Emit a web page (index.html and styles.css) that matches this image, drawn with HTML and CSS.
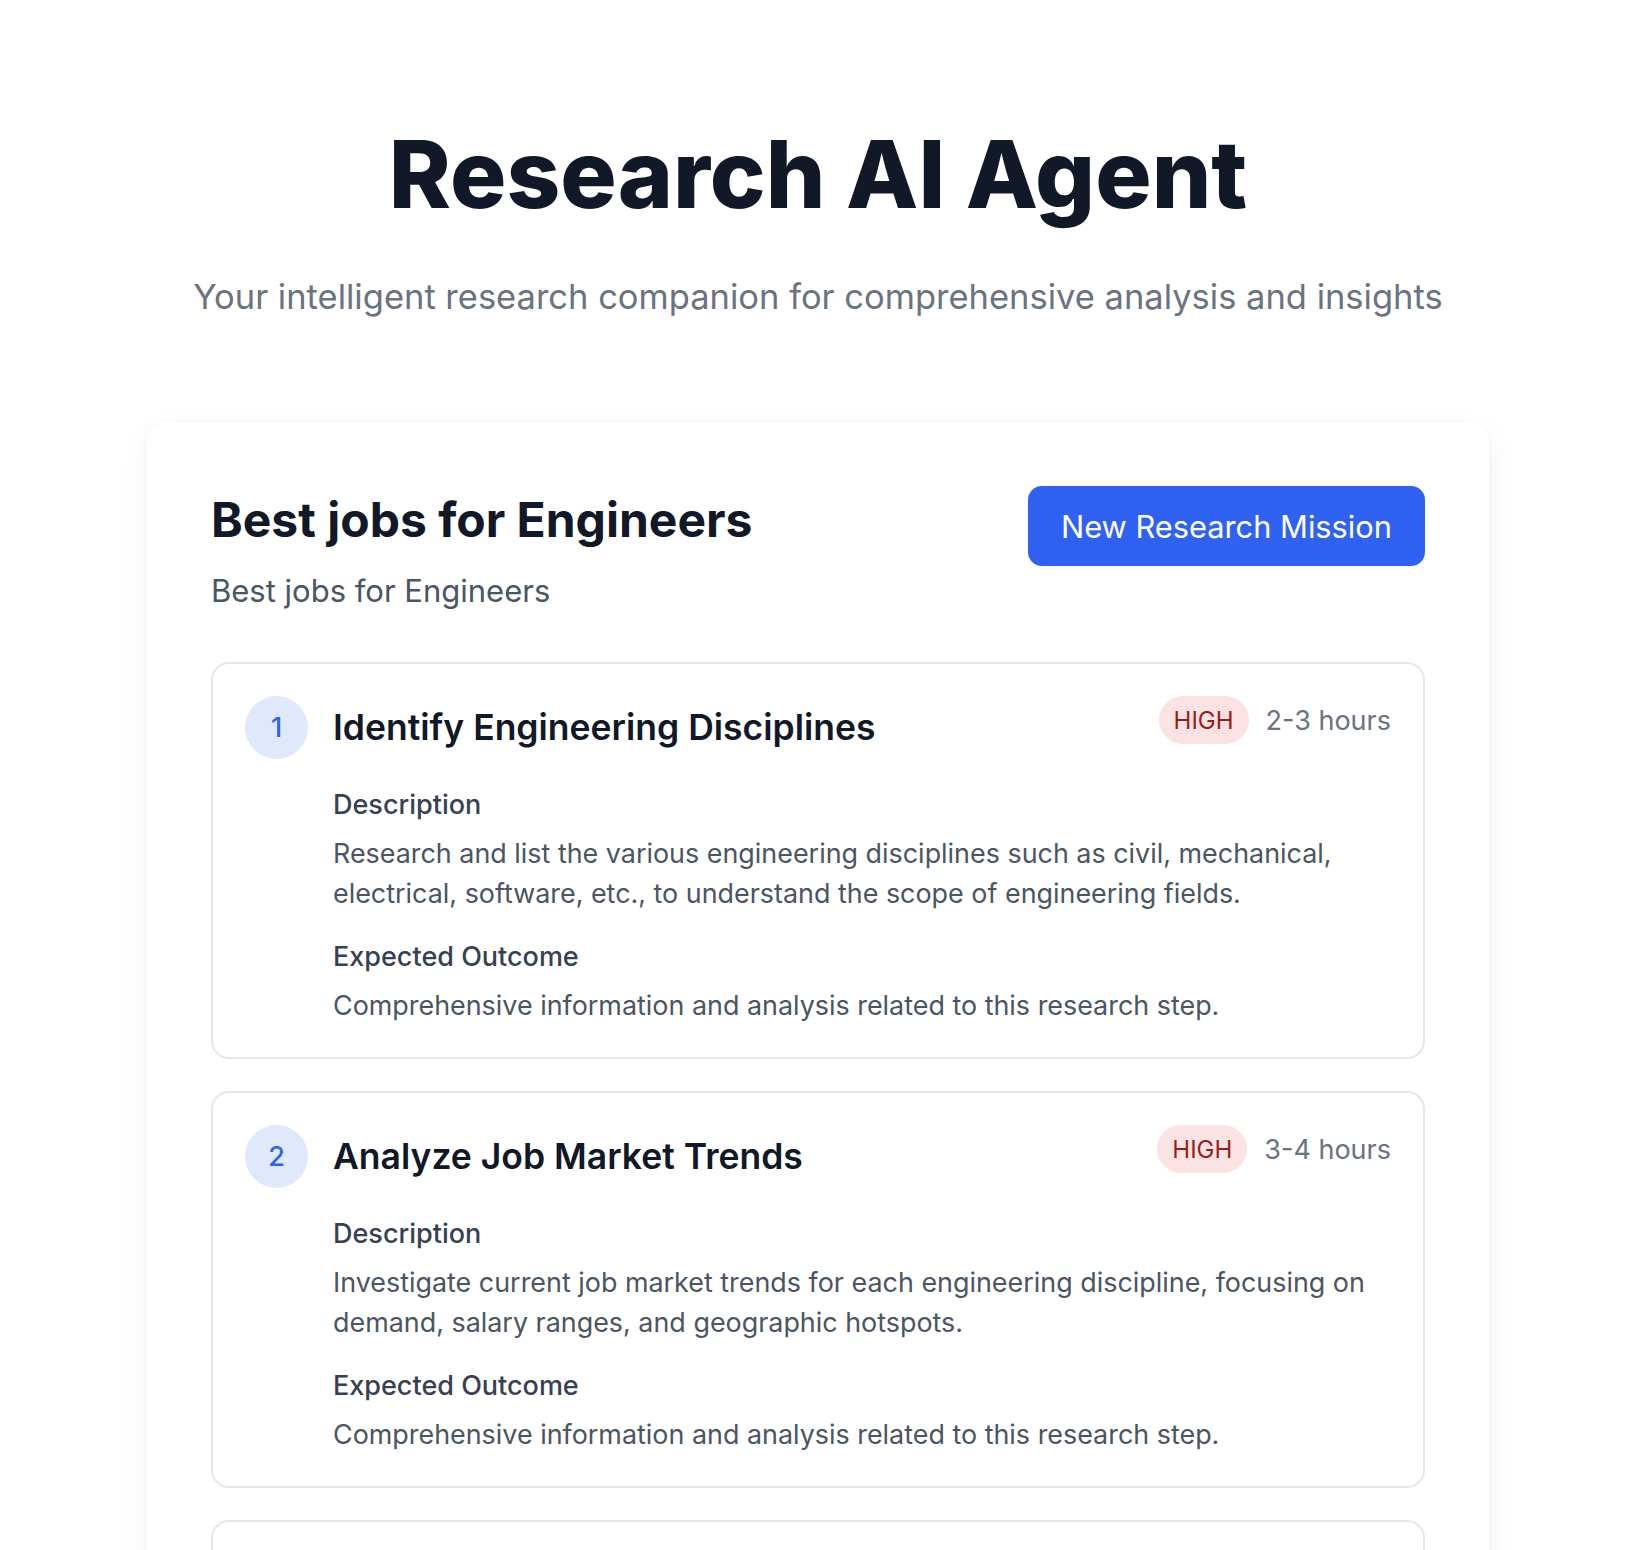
FILE: index.html
```html
<!DOCTYPE html>
<html lang="en">
<head>
<meta charset="utf-8">
<title>Research AI Agent</title>
<link rel="stylesheet" href="styles.css">
</head>
<body>
<main class="page">
  <header class="hero">
    <h1 class="hero-title">Research AI Agent</h1>
    <p class="hero-sub">Your intelligent research companion for comprehensive analysis and insights</p>
  </header>

  <section class="panel">
    <div class="panel-head">
      <div class="panel-titles">
        <h2 class="panel-title">Best jobs for Engineers</h2>
        <p class="panel-sub">Best jobs for Engineers</p>
      </div>
      <button class="btn-primary" type="button">New Research Mission</button>
    </div>

    <div class="steps">
      <article class="step">
        <div class="step-head">
          <div class="step-left">
            <span class="step-num">1</span>
            <h3 class="step-title">Identify Engineering Disciplines</h3>
          </div>
          <div class="step-meta">
            <span class="badge-high">HIGH</span>
            <span class="step-time">2-3 hours</span>
          </div>
        </div>
        <div class="step-body">
          <h4 class="step-label">Description</h4>
          <p class="step-text">Research and list the various engineering disciplines such as civil, mechanical, electrical, software, etc., to understand the scope of engineering fields.</p>
          <h4 class="step-label">Expected Outcome</h4>
          <p class="step-text">Comprehensive information and analysis related to this research step.</p>
        </div>
      </article>

      <article class="step">
        <div class="step-head">
          <div class="step-left">
            <span class="step-num">2</span>
            <h3 class="step-title">Analyze Job Market Trends</h3>
          </div>
          <div class="step-meta">
            <span class="badge-high">HIGH</span>
            <span class="step-time">3-4 hours</span>
          </div>
        </div>
        <div class="step-body">
          <h4 class="step-label">Description</h4>
          <p class="step-text">Investigate current job market trends for each engineering discipline, focusing on demand, salary ranges, and geographic hotspots.</p>
          <h4 class="step-label">Expected Outcome</h4>
          <p class="step-text">Comprehensive information and analysis related to this research step.</p>
        </div>
      </article>

      <article class="step step-partial"></article>
    </div>
  </section>
</main>
</body>
</html>
```

FILE: styles.css
```css
* { box-sizing: border-box; }

html, body {
  margin: 0;
  padding: 0;
  background: #ffffff;
}

body {
  font-family: Inter, "Noto Sans", "Liberation Sans", sans-serif;
  color: #111827;
  padding-right: 10px;
}

.page {
  width: 1342px;
  margin: 0 auto;
  padding-top: 124px;
}

.hero {
  text-align: center;
}

.hero-title {
  margin: 0;
  font-size: 94px;
  line-height: 100px;
  font-weight: 800;
  letter-spacing: 0;
  color: #111827;
}

.hero-sub {
  margin: 52px 0 0;
  font-size: 34.5px;
  line-height: 42px;
  color: #6b7280;
  white-space: nowrap;
}

.panel {
  margin-top: 104px;
  background: #ffffff;
  border-radius: 20px;
  box-shadow: 0 10px 30px rgba(0, 0, 0, 0.06), 0 2px 8px rgba(0, 0, 0, 0.03);
  padding: 64px 64px 64px;
}

.panel-head {
  display: flex;
  justify-content: space-between;
  align-items: flex-start;
}

.panel-title {
  margin: 6px 0 0;
  font-size: 48px;
  line-height: 56px;
  font-weight: 700;
  color: #111827;
}

.panel-sub {
  margin: 23px 0 0;
  font-size: 31px;
  line-height: 40px;
  color: #4b5563;
}

.btn-primary {
  height: 80px;
  padding: 0 33px;
  border: 0;
  border-radius: 14px;
  background: #2f61f3;
  color: #ffffff;
  font-family: inherit;
  font-size: 30.8px;
  font-weight: 400;
}

.steps {
  margin-top: 51px;
  display: flex;
  flex-direction: column;
  gap: 32px;
}

.step {
  border: 2px solid #e5e7eb;
  border-radius: 18px;
  padding: 32px 32px 32px;
}

.step-partial {
  height: 120px;
}

.step-head {
  display: flex;
  justify-content: space-between;
  align-items: flex-start;
}

.step-left {
  display: flex;
  align-items: center;
  gap: 25px;
}

.step-num {
  width: 63px;
  height: 63px;
  border-radius: 50%;
  background: #dfe9fb;
  color: #2f61f3;
  display: flex;
  align-items: center;
  justify-content: center;
  font-size: 27px;
  font-weight: 500;
}

.step-title {
  margin: 0;
  font-size: 35.5px;
  line-height: 44px;
  font-weight: 600;
  color: #111827;
}

.step-meta {
  display: flex;
  align-items: center;
  gap: 17px;
}

.badge-high {
  height: 48px;
  padding: 0 15px;
  border-radius: 24px;
  background: #fbe3e3;
  color: #9b1c1c;
  font-size: 24px;
  display: flex;
  align-items: center;
}

.step-time {
  font-size: 27px;
  color: #6b7280;
}

.step-body {
  margin-left: 88px;
  margin-top: 28px;
}

.step-label {
  margin: 0;
  font-size: 27px;
  line-height: 36px;
  font-weight: 500;
  color: #374151;
}

.step-text {
  margin: 10px 0 26px;
  font-size: 26.9px;
  line-height: 40px;
  color: #4b5563;
}

.step-text:last-child {
  margin-bottom: 0;
}
```
